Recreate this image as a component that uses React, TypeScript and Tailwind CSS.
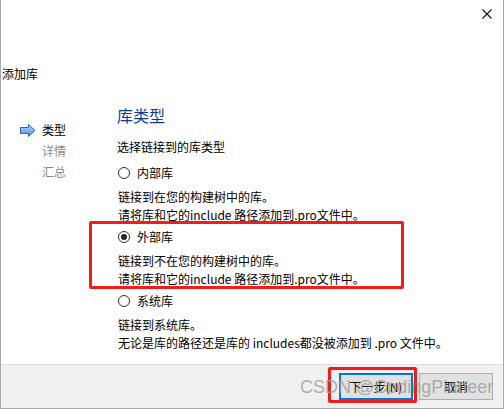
const font = "font-['Microsoft_YaHei','Noto_Sans_CJK_SC',sans-serif]";

type Option = {
  label: string;
  lines: string[];
  checked?: boolean;
};

const options: Option[] = [
  {
    label: "内部库",
    lines: ["链接到在您的构建树中的库。", "请将库和它的include 路径添加到.pro文件中。"],
  },
  {
    label: "外部库",
    lines: ["链接到不在您的构建树中的库。", "请将库和它的include 路径添加到.pro文件中。"],
    checked: true,
  },
  {
    label: "系统库",
    lines: ["链接到系统库。", "无论是库的路径还是库的 includes都没被添加到 .pro 文件中。"],
  },
];

function Radio({ checked }: { checked?: boolean }) {
  return (
    <span className="flex h-[12px] w-[12px] items-center justify-center rounded-full border border-[#333333] bg-white">
      {checked && <span className="h-[6px] w-[6px] rounded-full bg-[#222222]" />}
    </span>
  );
}

function StepArrow() {
  return (
    <svg width="16" height="13" viewBox="0 0 16 13">
      <defs>
        <linearGradient id="arrowFill" x1="0" y1="0" x2="0" y2="1">
          <stop offset="0" stopColor="#b9d4f5" />
          <stop offset="1" stopColor="#4f8fe0" />
        </linearGradient>
      </defs>
      <polygon
        points="0.5,3.5 8.5,3.5 8.5,0.5 15,6.5 8.5,12.5 8.5,9.5 0.5,9.5"
        fill="url(#arrowFill)"
        stroke="#2f63b8"
        strokeWidth="1"
      />
    </svg>
  );
}

export default function App() {
  return (
    <div className={`relative flex h-[409px] w-[504px] flex-col overflow-hidden border-x border-b border-[#a8a8a8] bg-white text-[12px] leading-[18px] text-black ${font}`}>
      {/* title bar */}
      <div className="flex h-[30px] justify-end pr-[10px] pt-[8px]">
        <svg width="12" height="12" viewBox="0 0 12 12">
          <path d="M1.5 1.5 L10.5 10.5 M10.5 1.5 L1.5 10.5" stroke="#111" strokeWidth="1.1" />
        </svg>
      </div>

      <div className="mt-[35px] pl-[1px]">添加库</div>

      <div className="flex">
        {/* steps */}
        <div className="mt-[38px] flex w-[116px] flex-col gap-[3px] pl-[19px]">
          <div className="flex items-center gap-[6px]">
            <StepArrow />
            <span>类型</span>
          </div>
          <div className="pl-[22px] text-[#8a8a8a]">详情</div>
          <div className="pl-[22px] text-[#8a8a8a]">汇总</div>
        </div>

        {/* page */}
        <div className="flex flex-col">
          <div className="mt-[21px] text-[16px] leading-[22px] text-[#0b3a9c]">库类型</div>
          <div className="mt-[12px]">选择链接到的库类型</div>
          <div className="mt-[8px] flex flex-col">
            {options.map((o, i) => (
              <div key={o.label} className={i === 0 ? "" : "mt-[4px]"}>
                <div className="flex h-[18px] items-center gap-[7px] pl-[1px]">
                  <Radio checked={o.checked} />
                  <span>{o.label}</span>
                </div>
                <div className="mt-[6px] pl-[1px]">
                  {o.lines.map((l) => (
                    <div key={l}>{l}</div>
                  ))}
                </div>
              </div>
            ))}
          </div>
        </div>
      </div>

      {/* footer */}
      <div className="mt-auto flex h-[44px] items-start justify-end gap-[6px] border-t border-[#dfdfdf] bg-[#f0f0f0] pr-[10px] pt-[8px]">
        <button className="flex h-[27px] w-[74px] items-center justify-center border-2 border-[#0078d7] bg-[#e1e1e1]">
          下一步(N)
        </button>
        <button className="flex h-[27px] w-[74px] items-center justify-center border border-[#adadad] bg-[#e1e1e1]">
          取消
        </button>
      </div>

      {/* annotations */}
      <div className="pointer-events-none absolute left-[88px] top-[221px] h-[68px] w-[315px] rounded-[2px] border-[3px] border-[#f21c1c]" />
      <div className="pointer-events-none absolute left-[327px] top-[367px] h-[36px] w-[89px] rounded-[2px] border-[3px] border-[#f21c1c]" />
      <div className="pointer-events-none absolute left-[299px] top-[376px] font-['Liberation_Sans',Arial,sans-serif] text-[18px] leading-[22px] text-[#9b9b9b]/80">
        CSDN @CodingPioneer
      </div>
    </div>
  );
}
